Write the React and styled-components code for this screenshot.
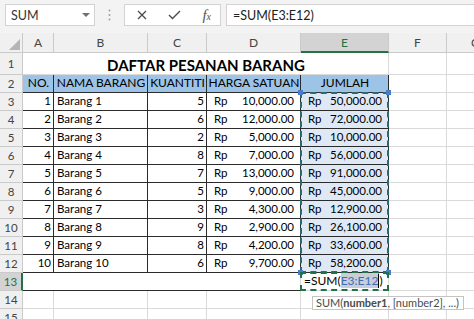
import styled, { createGlobalStyle } from "styled-components";

const GRID = "#dadada";
const INK = "#2b2b2b";
const GREEN = "#217346";
const HEAD_LINE = "#cacaca";

const GlobalStyle = createGlobalStyle`
  * { box-sizing: border-box; }
  html, body { margin: 0; background: #fff; }
  body {
    width: 474px;
    height: 319px;
    overflow: hidden;
    font-family: Lato, "Liberation Sans", sans-serif;
  }
`;

const Toolbar = styled.div`
  display: flex;
  align-items: flex-start;
  height: 33px;
  padding: 4px 0 0 5px;
  background: #f3f3f3;
  overflow: hidden;
`;

const Box = styled.div`
  height: 22px;
  background: #fff;
  border: 1px solid #d3d3d3;
  display: flex;
  align-items: center;
`;

const NameBox = styled(Box)`
  width: 90px;
  justify-content: space-between;
  padding: 0 4px 0 5px;
  font-size: 12.5px;
  color: #333;
`;

const Caret = styled.span`
  width: 0;
  height: 0;
  border-left: 4px solid transparent;
  border-right: 4px solid transparent;
  border-top: 4px solid #707070;
`;

const Grip = styled.div`
  width: 29px;
  height: 22px;
  display: flex;
  align-items: center;
  justify-content: center;
`;

const FxBox = styled(Box)`
  width: 97px;
  justify-content: space-between;
  padding: 0 9px 0 12px;
  color: #444;
`;

const FxGlyph = styled.span`
  font-family: "Liberation Serif", serif;
  font-style: italic;
  font-size: 15px;
  color: #555;
  small {
    font-size: 10px;
  }
`;

const FormulaInput = styled(Box)`
  flex: 1;
  margin-left: 5px;
  border-right: none;
  padding-left: 6px;
  font-size: 12.5px;
  color: #222;
`;

const Sheet = styled.div`
  display: grid;
  grid-template-columns: 23px 31px 94px 59px 94px 88px 58px 58px;
  grid-template-rows: 20px 22px repeat(14, 18px);
  color: #000;
  overflow: hidden;
`;

const Corner = styled.div`
  grid-column: 1;
  grid-row: 1;
  background: #f0f0f0;
  border-right: 1px solid ${HEAD_LINE};
  border-bottom: 1px solid ${HEAD_LINE};
  display: flex;
  align-items: flex-end;
  justify-content: flex-end;
  padding: 0 2px 2px 0;
`;

const ColHead = styled.div`
  grid-column: ${(p) => p.$col};
  grid-row: 1;
  background: ${(p) => (p.$active ? "#d3d3d3" : "#f0f0f0")};
  border-right: 1px solid ${HEAD_LINE};
  border-bottom: ${(p) => (p.$active ? `2px solid ${GREEN}` : `1px solid ${HEAD_LINE}`)};
  color: ${(p) => (p.$active ? GREEN : "#444")};
  display: flex;
  align-items: center;
  justify-content: center;
  font-size: 12px;
`;

const RowHead = styled.div`
  grid-column: 1;
  grid-row: ${(p) => p.$row};
  background: ${(p) => (p.$active ? "#d3d3d3" : "#f0f0f0")};
  border-right: ${(p) => (p.$active ? `2px solid ${GREEN}` : `1px solid ${HEAD_LINE}`)};
  border-bottom: 1px solid ${HEAD_LINE};
  color: ${(p) => (p.$active ? GREEN : "#444")};
  display: flex;
  align-items: center;
  justify-content: center;
  font-size: 11.5px;
`;

const justify = {
  left: "flex-start",
  right: "flex-end",
  center: "center",
  between: "space-between",
};

const Cell = styled.div`
  grid-column: ${(p) => `${p.$col} / span ${p.$span || 1}`};
  grid-row: ${(p) => p.$row};
  border-right: 1px solid ${(p) => p.$right || GRID};
  border-bottom: 1px solid ${(p) => p.$bottom || GRID};
  background: ${(p) => p.$bg || "#fff"};
  display: flex;
  align-items: flex-end;
  justify-content: ${(p) => justify[p.$align || "left"]};
  padding: ${(p) => (p.$align === "between" ? "0 6px 2px 7px" : "0 2px 2px 3px")};
  font-weight: ${(p) => (p.$bold ? 700 : 400)};
  font-size: ${(p) => p.$size || 11.5}px;
  line-height: 14px;
  white-space: nowrap;
`;

const Marquee = styled.div`
  grid-column: 6;
  grid-row: ${(p) => p.$rows};
  margin: -1px 0 0 -1px;
  border: 2px dashed ${(p) => p.$color};
  position: relative;
  z-index: 2;
  pointer-events: none;
`;

const Handle = styled.span`
  position: absolute;
  width: 5px;
  height: 5px;
  background: #4a7cc9;
  ${(p) => (p.$top ? "top: -4px;" : "bottom: -4px;")}
  ${(p) => (p.$left ? "left: -4px;" : "right: -4px;")}
`;

const Editor = styled(Marquee)`
  display: flex;
  align-items: flex-end;
  padding: 0 0 1px 2px;
  font-size: 12px;
  line-height: 14px;
  white-space: nowrap;
  z-index: 3;
`;

const RefText = styled.span`
  background: #c7ced8;
  color: #3e6db8;
`;

const Caret2 = styled.span`
  display: inline-block;
  width: 1px;
  height: 14px;
  background: #000;
  vertical-align: -3px;
`;

const Tip = styled.div`
  position: absolute;
  left: 10px;
  top: 22px;
  height: 14px;
  border: 1px solid #c4c4c4;
  background: #fff;
  color: #4a4a4a;
  font-size: 11px;
  line-height: 12px;
  padding: 0 4px 0 3px;
  white-space: nowrap;
`;

const items = [
  [1, "Barang 1", 5, "10,000.00", "50,000.00"],
  [2, "Barang 2", 6, "12,000.00", "72,000.00"],
  [3, "Barang 3", 2, "5,000.00", "10,000.00"],
  [4, "Barang 4", 8, "7,000.00", "56,000.00"],
  [5, "Barang 5", 7, "13,000.00", "91,000.00"],
  [6, "Barang 6", 5, "9,000.00", "45,000.00"],
  [7, "Barang 7", 3, "4,300.00", "12,900.00"],
  [8, "Barang 8", 9, "2,900.00", "26,100.00"],
  [9, "Barang 9", 8, "4,200.00", "33,600.00"],
  [10, "Barang 10", 6, "9,700.00", "58,200.00"],
];

const headers = ["NO.", "NAMA BARANG", "KUANTITI", "HARGA SATUAN", "JUMLAH"];

function emptyCells(row, from) {
  const out = [];
  for (let c = from; c <= 8; c++) {
    out.push(<Cell key={`${row}-${c}`} $row={row} $col={c} />);
  }
  return out;
}

function Money({ value }) {
  return (
    <>
      <span>Rp</span>
      <span>{value}</span>
    </>
  );
}

function buildCells() {
  const cells = [];
  // row 1: title
  cells.push(
    <Cell key="title" $row={2} $col={2} $span={5} $align="center" $bold $size={15}>
      DAFTAR PESANAN BARANG
    </Cell>
  );
  cells.push(...emptyCells(2, 7));

  // row 2: headers
  headers.forEach((h, i) => {
    cells.push(
      <Cell key={h} $row={3} $col={i + 2} $align="center" $size={12} $bg="#9dc3e6" $right={INK} $bottom={INK}>
        {h}
      </Cell>
    );
  });
  cells.push(...emptyCells(3, 7));

  // rows 3-12: data
  items.forEach(([no, name, qty, price, total], i) => {
    const row = i + 4;
    const line = { $row: row, $right: INK, $bottom: INK };
    cells.push(
      <Cell key={`a${row}`} {...line} $col={2} $align="right">{no}</Cell>,
      <Cell key={`b${row}`} {...line} $col={3}>{name}</Cell>,
      <Cell key={`c${row}`} {...line} $col={4} $align="right">{qty}</Cell>,
      <Cell key={`d${row}`} {...line} $col={5} $align="between"><Money value={price} /></Cell>,
      <Cell key={`e${row}`} {...line} $col={6} $align="between" $bg="#dfe9f6"><Money value={total} /></Cell>
    );
    cells.push(...emptyCells(row, 7));
  });

  // row 13
  cells.push(<Cell key="a14" $row={14} $col={2} $span={4} $bottom={INK} />);
  cells.push(...emptyCells(14, 6));

  // rows 14-15
  cells.push(...emptyCells(15, 2));
  cells.push(...emptyCells(16, 2));
  return cells;
}

export default function App() {
  const letters = ["A", "B", "C", "D", "E", "F", "G"];
  return (
    <>
      <GlobalStyle />
      <Toolbar>
        <NameBox>
          SUM
          <Caret />
        </NameBox>
        <Grip>
          <svg width="3" height="12" viewBox="0 0 3 12">
            <circle cx="1.5" cy="1.5" r="1" fill="#a0a0a0" />
            <circle cx="1.5" cy="6" r="1" fill="#a0a0a0" />
            <circle cx="1.5" cy="10.5" r="1" fill="#a0a0a0" />
          </svg>
        </Grip>
        <FxBox>
          <svg width="10" height="10" viewBox="0 0 10 10">
            <path d="M1 1 L9 9 M9 1 L1 9" stroke="#4a4a4a" strokeWidth="1.3" fill="none" />
          </svg>
          <svg width="13" height="10" viewBox="0 0 13 10">
            <path d="M1 5 L4.5 8.5 L12 1" stroke="#4a4a4a" strokeWidth="1.4" fill="none" />
          </svg>
          <FxGlyph>
            f<small>x</small>
          </FxGlyph>
        </FxBox>
        <FormulaInput>=SUM(E3:E12)</FormulaInput>
      </Toolbar>
      <Sheet>
        <Corner>
          <svg width="11" height="11" viewBox="0 0 11 11">
            <polygon points="11,0 11,11 0,11" fill="#b5b5b5" />
          </svg>
        </Corner>
        {letters.map((l, i) => (
          <ColHead key={l} $col={i + 2} $active={l === "E"}>
            {l}
          </ColHead>
        ))}
        {Array.from({ length: 15 }, (_, i) => (
          <RowHead key={i} $row={i + 2} $active={i + 1 === 13}>
            {i + 1}
          </RowHead>
        ))}
        {buildCells()}
        <Marquee $rows="4 / 14" $color="#2a6b6f">
          <Handle $top $left />
          <Handle $top />
          <Handle $left />
          <Handle />
        </Marquee>
        <Editor $rows="14" $color={GREEN}>
          <span>
            =SUM(<RefText>E3:E12</RefText>
            <Caret2 />)
          </span>
          <Tip>
            SUM(<b>number1</b>, [number2], ...)
          </Tip>
        </Editor>
      </Sheet>
    </>
  );
}
